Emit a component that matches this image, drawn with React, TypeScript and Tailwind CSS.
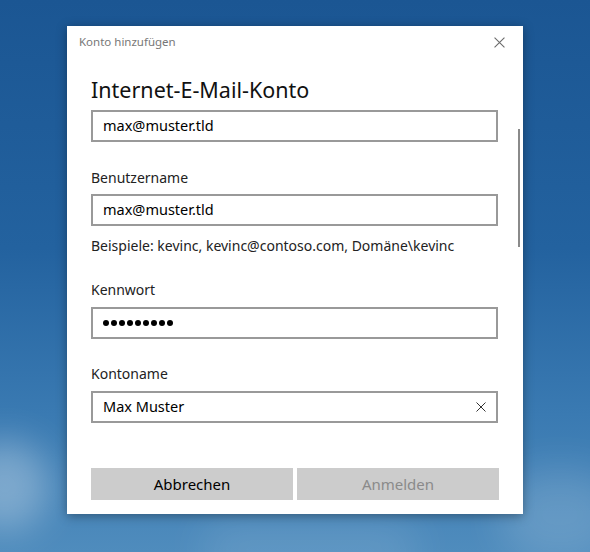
const font = { fontFamily: '"Noto Sans", "Open Sans", sans-serif' }

const XIcon = ({ size, color }: { size: number; color: string }) => (
  <svg width={size} height={size} viewBox="0 0 10 10" fill="none">
    <path d="M0.5 0.5L9.5 9.5M9.5 0.5L0.5 9.5" stroke={color} strokeWidth="1" />
  </svg>
)

const Field = ({ children }: { children: React.ReactNode }) => (
  <div className="w-[407px] h-[32px] border-2 border-[#999999] flex items-center pl-[10px] pr-[10px] text-[14.5px] text-black">
    {children}
  </div>
)

export default function App() {
  return (
    <div
      className="relative w-[590px] h-[552px] overflow-hidden bg-[linear-gradient(180deg,#1b5693_0%,#23629f_45%,#3a7ab2_75%,#4f8cbd_100%)]"
      style={font}
    >
      {/* clouds */}
      <div className="absolute left-[-40px] top-[440px] w-[90px] h-[90px] rounded-full bg-white/30 blur-[18px]" />
      <div className="absolute left-[500px] top-[470px] w-[120px] h-[90px] rounded-full bg-white/15 blur-[20px]" />
      <div className="absolute left-[200px] top-[520px] w-[220px] h-[60px] rounded-full bg-white/10 blur-[20px]" />

      <div className="relative pt-[26px] pl-[67px]">
        <div className="relative w-[456px] h-[488px] bg-white shadow-[0_2px_10px_rgba(0,0,0,0.35)]">
          {/* title bar */}
          <div className="h-[32px] flex items-center justify-between pl-[12px] pr-[18px]">
            <span className="text-[11.5px] text-[#777777]">Konto hinzufügen</span>
            <XIcon size={11} color="#6b6b6b" />
          </div>

          <div className="pl-[24px]">
            <div className="mt-[18px] h-[28px] flex items-center text-[21.5px] text-[#111111]">
              Internet-E-Mail-Konto
            </div>
            <div className="mt-[6px]">
              <Field>max@muster.tld</Field>
            </div>

            <div className="mt-[25px] h-[20px] flex items-center text-[14px] text-[#222222]">Benutzername</div>
            <div className="mt-[7px]">
              <Field>max@muster.tld</Field>
            </div>
            <div className="mt-[9px] h-[20px] flex items-center text-[14px] text-[#222222]">
              Beispiele: kevinc, kevinc@contoso.com, Domäne\kevinc
            </div>

            <div className="mt-[24px] h-[20px] flex items-center text-[14px] text-[#222222]">Kennwort</div>
            <div className="mt-[8px]">
              <Field>
                <div className="flex gap-[2px]">
                  {Array.from({ length: 9 }).map((_, i) => (
                    <span key={i} className="w-[6px] h-[6px] rounded-full bg-black" />
                  ))}
                </div>
              </Field>
            </div>

            <div className="mt-[24px] h-[20px] flex items-center text-[14px] text-[#222222]">Kontoname</div>
            <div className="mt-[8px]">
              <Field>
                <span className="flex-1">Max Muster</span>
                <XIcon size={10} color="#333333" />
              </Field>
            </div>

            <div className="mt-[45px] flex gap-[4px]">
              <button className="w-[202px] h-[32px] bg-[#cccccc] text-[15px] text-black">Abbrechen</button>
              <button className="w-[202px] h-[32px] bg-[#cccccc] text-[15px] text-[#8a8a8a]">Anmelden</button>
            </div>
          </div>

          {/* scrollbar */}
          <div className="absolute left-[451px] top-[103px] w-[2px] h-[118px] bg-[#8a8a8a]" />
        </div>
      </div>
    </div>
  )
}
